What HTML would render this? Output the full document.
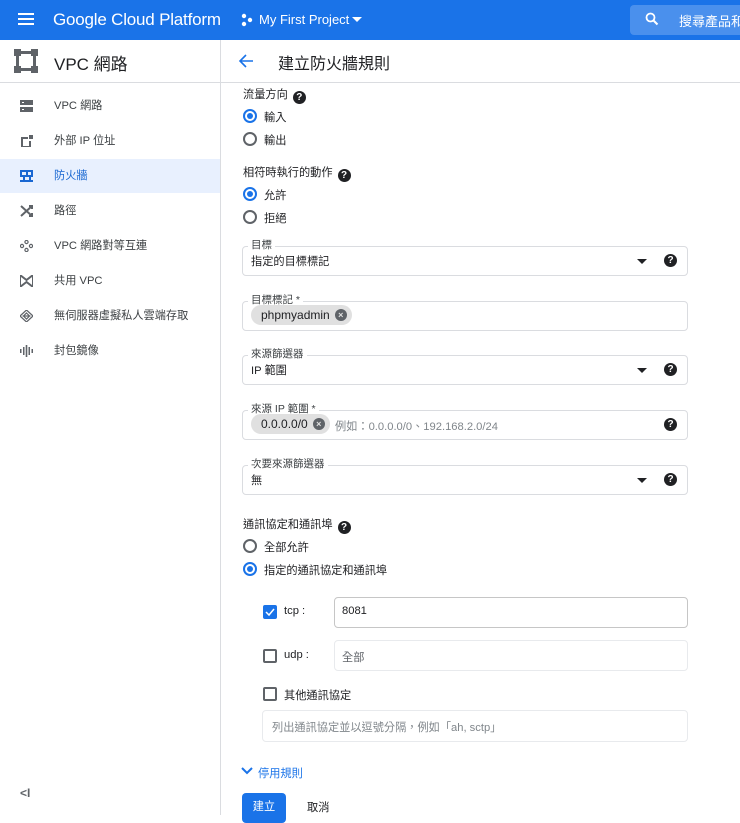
<!DOCTYPE html>
<html><head><meta charset="utf-8"><style>
*{box-sizing:border-box;margin:0;padding:0}
body{width:740px;height:815px;overflow:hidden;font-family:"Liberation Sans","Noto Sans CJK TC",sans-serif;font-size:11.2px;color:#202124;background:#fff;position:relative}
.a{position:absolute;white-space:nowrap}
.hdr{left:0;top:0;width:740px;height:40px;background:#1a73e8;color:#fff;overflow:hidden}
.side{left:0;top:40px;width:221px;height:775px;border-right:1px solid #dadce0}
.item{position:absolute;left:0;width:220px;height:34px;line-height:34px;padding-left:54px;color:#3c4043;font-size:11.2px}
.ico{position:absolute;left:20px;top:11px;width:13px;height:12px}
.box{position:absolute;left:242px;width:446px;border:1px solid #dadce0;border-radius:4px}
.lbl{position:absolute;left:248px;background:#fff;padding:0 3px 0 3px;font-size:10.5px;color:#3c4043;white-space:nowrap}
.radio{position:absolute;left:243px;width:14px;height:14px;border:2px solid #5f6368;border-radius:50%}
.radio.on{border-color:#1a73e8}
.radio.on:after{content:"";position:absolute;left:2px;top:2px;width:6px;height:6px;border-radius:50%;background:#1a73e8}
.q{position:absolute;width:13px;height:13px;border-radius:50%;background:#202124;color:#fff;font-size:10px;font-weight:bold;text-align:center;line-height:13px}
.qi{display:inline-block;vertical-align:-2px;margin-left:5px;width:13px;height:13px;border-radius:50%;background:#202124;color:#fff;font-size:10px;font-weight:bold;text-align:center;line-height:13px}
.tri{position:absolute;width:0;height:0;border-left:5px solid transparent;border-right:5px solid transparent;border-top:5px solid #202124}
.chip{position:absolute;height:20px;border-radius:10px;background:#e0e0e0;padding:0 22px 0 10px;line-height:20px;font-size:12px;white-space:nowrap}
.chip i{position:absolute;right:5px;top:4px;width:12px;height:12px;border-radius:50%;background:#5f6368;color:#e0e0e0;font-style:normal;font-size:9px;line-height:12px;text-align:center;font-weight:bold}
.cb{position:absolute;left:263px;width:14px;height:14px;border:2px solid #5f6368;border-radius:2px}
</style></head><body>
<div class="a hdr">
 <div class="a" style="left:18px;top:13px;width:16px;height:2px;background:#fff;box-shadow:0 5px 0 #fff,0 10px 0 #fff"></div>
 <div class="a" style="left:53px;top:10px;font-size:17px;letter-spacing:-0.2px">Google Cloud Platform</div>
 <svg class="a" style="left:240px;top:13px" width="14" height="14" viewBox="0 0 14 14"><circle cx="4" cy="3" r="2.2" fill="#fff"/><circle cx="10" cy="7" r="2.2" fill="#fff"/><circle cx="4" cy="11" r="2.2" fill="#fff"/></svg>
 <div class="a" style="left:259px;top:12px;font-size:13px">My First Project</div>
 <div class="a" style="left:352px;top:17px;border-left:5px solid transparent;border-right:5px solid transparent;border-top:5px solid #fff"></div>
 <div class="a" style="left:630px;top:5px;width:120px;height:30px;background:#4a90ed;border-radius:4px"></div>
 <svg class="a" style="left:645px;top:12px" width="14" height="14" viewBox="0 0 14 14"><circle cx="5.5" cy="5.5" r="4" stroke="#fff" stroke-width="1.8" fill="none"/><path d="M8.5 8.5L12.5 12.5" stroke="#fff" stroke-width="2"/></svg>
 <div class="a" style="left:679px;top:11px;font-size:13px">搜尋產品和</div>
</div>
<div class="a" style="left:0;top:82px;width:740px;height:1px;background:#dadce0"></div>
<div class="a side">
 <svg class="a" style="left:14px;top:9px" width="24" height="24" viewBox="0 0 24 24"><rect x="0" y="0" width="7" height="7" fill="#5f6368"/><rect x="17" y="0" width="7" height="7" fill="#5f6368"/><rect x="0" y="17" width="7" height="7" fill="#5f6368"/><rect x="17" y="17" width="7" height="7" fill="#5f6368"/><rect x="7" y="2" width="10" height="3" fill="#5f6368"/><rect x="7" y="19" width="10" height="3" fill="#5f6368"/><rect x="2" y="7" width="3" height="10" fill="#5f6368"/><rect x="19" y="7" width="3" height="10" fill="#5f6368"/></svg>
 <div class="a" style="left:54px;top:10px;font-size:17px;color:#202124">VPC 網路</div>
 <div class="item" style="top:49px"><svg class="ico" viewBox="0 0 13 12"><rect x="0" y="0" width="13" height="5" fill="#5f6368"/><rect x="0" y="7" width="13" height="5" fill="#5f6368"/><rect x="2" y="2" width="2" height="1" fill="#fff"/><rect x="2" y="9" width="2" height="1" fill="#fff"/></svg>VPC 網路</div>
 <div class="item" style="top:84px"><svg class="ico" viewBox="0 0 13 12"><path d="M1 2H8V4H3V11H9V6H11V12H1Z" fill="#5f6368"/><rect x="9" y="0" width="4" height="4" fill="#5f6368"/></svg>外部 IP 位址</div>
 <div class="item" style="top:119px;background:#e8f0fe;color:#1967d2"><svg class="ico" viewBox="0 0 13 12"><g fill="#1967d2"><rect x="0" y="0" width="13" height="2"/><rect x="0" y="5" width="13" height="2"/><rect x="0" y="10" width="13" height="2"/><rect x="0" y="2" width="2" height="3"/><rect x="6" y="2" width="2" height="3"/><rect x="11" y="2" width="2" height="3"/><rect x="3" y="7" width="2" height="3"/><rect x="9" y="7" width="2" height="3"/></g></svg>防火牆</div>
 <div class="item" style="top:154px"><svg class="ico" viewBox="0 0 13 12"><path d="M1 1L12 11M1 11L12 1M9 1H12V4M9 11H12V8" stroke="#5f6368" stroke-width="2" fill="none"/></svg>路徑</div>
 <div class="item" style="top:189px"><svg class="ico" viewBox="0 0 13 12"><g fill="none" stroke="#5f6368" stroke-width="1.2"><circle cx="6.5" cy="2" r="1.6"/><circle cx="6.5" cy="10" r="1.6"/><circle cx="2" cy="6" r="1.6"/><circle cx="11" cy="6" r="1.6"/></g></svg>VPC 網路對等互連</div>
 <div class="item" style="top:224px"><svg class="ico" viewBox="0 0 13 12"><path d="M0 0L6.5 5L13 0V12L6.5 7L0 12Z" fill="none" stroke="#5f6368" stroke-width="2"/></svg>共用 VPC</div>
 <div class="item" style="top:259px"><svg class="ico" viewBox="0 0 13 12"><path d="M6.5 0L13 6L6.5 12L0 6Z M2.5 6H10.5M6.5 3L9.5 6L6.5 9L3.5 6Z" fill="none" stroke="#5f6368" stroke-width="1.2"/></svg>無伺服器虛擬私人雲端存取</div>
 <div class="item" style="top:294px"><svg class="ico" viewBox="0 0 13 12"><g fill="#5f6368"><rect x="0" y="4" width="1.5" height="4"/><rect x="3" y="2" width="1.5" height="8"/><rect x="5.7" y="0" width="1.6" height="12"/><rect x="8.5" y="2" width="1.5" height="8"/><rect x="11.5" y="4" width="1.5" height="4"/></g></svg>封包鏡像</div>
 <div class="a" style="left:20px;top:746px;font-size:12px;color:#5f6368;font-weight:bold">&lt;I</div>
</div>
<svg class="a" style="left:238px;top:53px" width="16" height="16" viewBox="0 0 16 16"><path d="M15 8H2M8 2L2 8L8 14" stroke="#1a73e8" stroke-width="1.6" fill="none"/></svg>
<div class="a" style="left:278px;top:50px;font-size:16px">建立防火牆規則</div>

<div class="a" style="left:243px;top:86px">流量方向<span class="qi">?</span></div>
<div class="radio on" style="top:109px"></div><div class="a" style="left:264px;top:109px">輸入</div>
<div class="radio" style="top:132px"></div><div class="a" style="left:264px;top:132px">輸出</div>
<div class="a" style="left:243px;top:164px">相符時執行的動作<span class="qi">?</span></div>
<div class="radio on" style="top:187px"></div><div class="a" style="left:264px;top:187px">允許</div>
<div class="radio" style="top:210px"></div><div class="a" style="left:264px;top:210px">拒絕</div>

<div class="box" style="top:246px;height:30px"></div><div class="lbl" style="top:237px">目標</div>
<div class="a" style="left:251px;top:253px">指定的目標標記</div><div class="tri" style="left:637px;top:259px"></div><div class="q" style="left:664px;top:254px">?</div>

<div class="box" style="top:301px;height:30px"></div><div class="lbl" style="top:292px">目標標記 *</div>
<div class="chip" style="left:251px;top:305px">phpmyadmin<i>×</i></div>

<div class="box" style="top:355px;height:30px"></div><div class="lbl" style="top:346px">來源篩選器</div>
<div class="a" style="left:251px;top:362px">IP 範圍</div><div class="tri" style="left:637px;top:368px"></div><div class="q" style="left:664px;top:363px">?</div>

<div class="box" style="top:410px;height:30px"></div><div class="lbl" style="top:401px">來源 IP 範圍 *</div>
<div class="chip" style="left:251px;top:414px">0.0.0.0/0<i>×</i></div>
<div class="a" style="left:335px;top:418px;color:#80868b">例如：0.0.0.0/0、192.168.2.0/24</div><div class="q" style="left:664px;top:418px">?</div>

<div class="box" style="top:465px;height:30px"></div><div class="lbl" style="top:456px">次要來源篩選器</div>
<div class="a" style="left:251px;top:472px">無</div><div class="tri" style="left:637px;top:478px"></div><div class="q" style="left:664px;top:473px">?</div>

<div class="a" style="left:243px;top:516px">通訊協定和通訊埠<span class="qi">?</span></div>
<div class="radio" style="top:539px"></div><div class="a" style="left:264px;top:539px">全部允許</div>
<div class="radio on" style="top:562px"></div><div class="a" style="left:264px;top:562px">指定的通訊協定和通訊埠</div>

<div class="cb" style="top:605px;background:#1a73e8;border-color:#1a73e8"><svg width="10" height="10" viewBox="0 0 10 10" style="position:absolute;left:0;top:0"><path d="M1 5L4 8L9 2" stroke="#fff" stroke-width="1.5" fill="none"/></svg></div>
<div class="a" style="left:284px;top:605px">tcp :</div>
<div class="a" style="left:334px;top:597px;width:354px;height:31px;border:1px solid #c6c6c6;border-radius:4px"></div>
<div class="a" style="left:342px;top:605px">8081</div>
<div class="cb" style="top:649px"></div><div class="a" style="left:284px;top:649px">udp :</div>
<div class="a" style="left:334px;top:640px;width:354px;height:31px;border:1px solid #e8eaed;border-radius:4px"></div>
<div class="a" style="left:342px;top:649px;color:#5f6368">全部</div>
<div class="cb" style="top:687px"></div><div class="a" style="left:284px;top:687px">其他通訊協定</div>
<div class="a" style="left:262px;top:710px;width:426px;height:32px;border:1px solid #e8eaed;border-radius:4px"></div>
<div class="a" style="left:272px;top:719px;color:#80868b">列出通訊協定並以逗號分隔，例如「ah, sctp」</div>

<svg class="a" style="left:241px;top:766px" width="12" height="10" viewBox="0 0 12 10"><path d="M1 2L6 7L11 2" stroke="#1a73e8" stroke-width="2" fill="none"/></svg>
<div class="a" style="left:258px;top:765px;color:#1a73e8">停用規則</div>
<div class="a" style="left:242px;top:793px;width:44px;height:30px;background:#1a73e8;border-radius:4px;color:#fff;text-align:center;line-height:28px">建立</div>
<div class="a" style="left:307px;top:799px;color:#202124">取消</div>
</body></html>
